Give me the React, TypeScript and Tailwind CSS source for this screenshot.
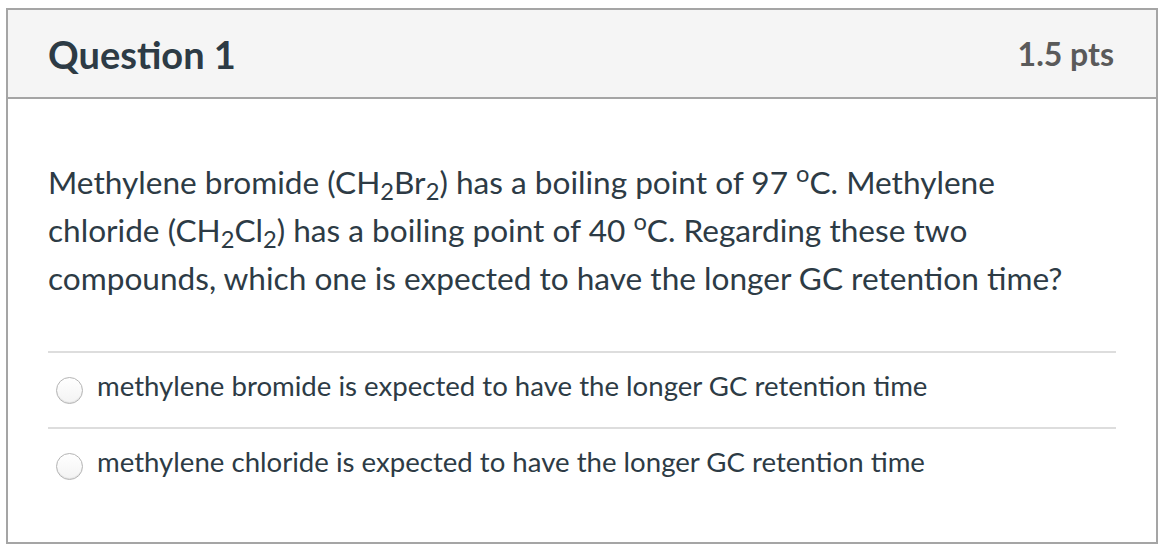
export default function App() {
  const options = [
    'methylene bromide is expected to have the longer GC retention time',
    'methylene chloride is expected to have the longer GC retention time',
  ]

  return (
    <div className="w-[1170px] h-[548px] bg-white pt-[8px] pl-[6px] font-['Lato',sans-serif] text-[#2d3b45]">
      <div className="w-[1152px] h-[536px] border-2 border-[#a5a5a5] flex flex-col">
        {/* Header */}
        <div className="h-[89px] bg-[#f5f5f5] border-b-2 border-[#a5a5a5] flex items-center justify-between pl-[40px] pr-[42px]">
          <h2 className="text-[38px] font-bold leading-none">Question 1</h2>
          <div className="text-[32px] font-bold text-[#5a5a5a] leading-none">1.5 pts</div>
        </div>

        {/* Body */}
        <div className="px-[40px] pt-[59px]">
          <p className="text-[31.6px] leading-[48px] w-[1035px]">
            Methylene bromide (CH<sub>2</sub>Br<sub>2</sub>) has a boiling point of 97 <sup>o</sup>C. Methylene chloride (CH<sub>2</sub>Cl<sub>2</sub>) has a boiling point of 40 <sup>o</sup>C. Regarding these two compounds, which one is expected to have the longer GC retention time?
          </p>

          <div className="mt-[49px]">
            {options.map((text) => (
              <label
                key={text}
                className="flex items-center h-[76px] border-t-2 border-[#dddddd] gap-[14px]"
              >
                <span className="ml-[8px] w-[27px] h-[27px] rounded-full border border-[#b4b4b4] bg-gradient-to-b from-white to-[#f3f3f3] shadow-[inset_0_-1px_1px_rgba(0,0,0,0.08)] shrink-0" />
                <span className="text-[27.6px] relative -top-[4px]">{text}</span>
              </label>
            ))}
          </div>
        </div>
      </div>
    </div>
  )
}
